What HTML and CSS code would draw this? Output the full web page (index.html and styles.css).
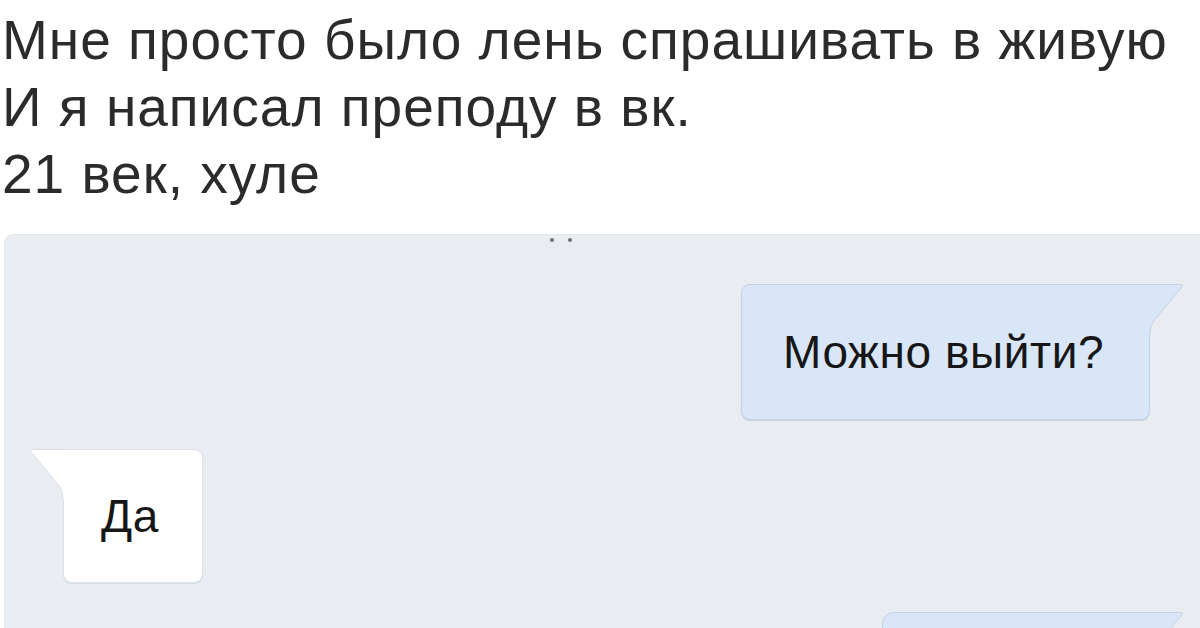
FILE: index.html
```html
<!DOCTYPE html>
<html lang="ru">
<head>
<meta charset="utf-8">
<title>Чат</title>
<link rel="stylesheet" href="styles.css">
</head>
<body>
  <div class="caption">
    <p class="line">Мне просто было лень спрашивать в живую</p>
    <p class="line">И я написал преподу в вк.</p>
    <p class="line">21 век, хуле</p>
  </div>
  <div class="chat">
    <div class="typing"><span class="dot"></span><span class="dot"></span></div>
    <div class="row row-out">
      <div class="bubble bubble-out">
        <span class="msg">Можно выйти?</span>
        <svg class="tail tail-out" width="36" height="50" viewBox="0 0 36 50">
          <path d="M0 0 H31 Q35 0 32.5 3.5 L4 38 Q1 42 1 50 H0 Z" fill="#d8e6f7"/>
          <path d="M0 0.5 H31 Q35 0.5 32.5 3.5 L4 38 Q1 42 1 50" fill="none" stroke="#c3d2e4" stroke-width="1"/>
        </svg>
      </div>
    </div>
    <div class="row row-in">
      <div class="bubble bubble-in">
        <span class="msg">Да</span>
        <svg class="tail tail-in" width="36" height="50" viewBox="0 0 36 50">
          <path d="M36 0 H5 Q1 0 3.5 3.5 L32 38 Q35 42 35 50 H36 Z" fill="#ffffff"/>
          <path d="M36 0.5 H5 Q1 0.5 3.5 3.5 L32 38 Q35 42 35 50" fill="none" stroke="#d9dee5" stroke-width="1"/>
        </svg>
      </div>
    </div>
    <div class="row row-out row-last">
      <div class="bubble bubble-out bubble-cut">
        <svg class="tail tail-out" width="36" height="50" viewBox="0 0 36 50">
          <path d="M0 0 H31 Q35 0 32.5 3.5 L4 38 Q1 42 1 50 H0 Z" fill="#d8e6f7"/>
          <path d="M0 0.5 H31 Q35 0.5 32.5 3.5 L4 38 Q1 42 1 50" fill="none" stroke="#c3d2e4" stroke-width="1"/>
        </svg>
      </div>
    </div>
  </div>
</body>
</html>
```

FILE: styles.css
```css
html, body {
  margin: 0;
  padding: 0;
  background: #ffffff;
  width: 1200px;
  height: 628px;
  overflow: hidden;
}

body {
  display: flex;
  flex-direction: column;
  font-family: "Liberation Sans", Arial, sans-serif;
}

.caption {
  padding: 7px 0 0 2px;
  color: #2b2b2b;
}

.line {
  margin: 0;
  font-size: 55px;
  line-height: 67px;
  letter-spacing: 1px;
  white-space: nowrap;
}

.chat {
  position: relative;
  flex: 1;
  margin: 26px 0 0 4px;
  background: #e9edf2;
  border-top-left-radius: 9px;
  border-top: 1px solid #e1e6ec;
  border-left: 1px solid #e1e6ec;
  padding-top: 49px;
  display: flex;
  flex-direction: column;
  overflow: hidden;
}

.typing {
  position: absolute;
  top: 3px;
  left: 545px;
  display: flex;
  gap: 14px;
}

.dot {
  width: 4px;
  height: 4px;
  border-radius: 50%;
  background: #6b6f75;
}

.row {
  display: flex;
}

.row-out {
  justify-content: flex-end;
  padding-right: 50px;
}

.row-in {
  justify-content: flex-start;
  padding-left: 58px;
  margin-top: 29px;
}

.row-last {
  margin-top: 29px;
}

.bubble {
  position: relative;
  border-radius: 9px;
  display: flex;
  align-items: center;
  box-sizing: border-box;
  color: #161616;
  font-size: 46px;
  letter-spacing: 0.6px;
}

.bubble-out {
  background: #d8e6f7;
  border: 1px solid #c3d2e4;
  border-top-right-radius: 0;
  box-shadow: 0 1px 1px rgba(60, 80, 110, 0.18);
  width: 409px;
  height: 136px;
  padding-left: 41px;
}

.bubble-in {
  background: #ffffff;
  border: 1px solid #dde2e8;
  border-top-left-radius: 0;
  box-shadow: 0 1px 1px rgba(60, 80, 110, 0.12);
  width: 140px;
  height: 134px;
  padding-left: 37px;
}

.bubble-cut {
  width: 268px;
  height: 60px;
  border-top-left-radius: 12px;
}

.tail {
  position: absolute;
  top: -1px;
}

.tail-out {
  right: -36px;
}

.tail-in {
  left: -36px;
}

.msg {
  white-space: nowrap;
}
```
